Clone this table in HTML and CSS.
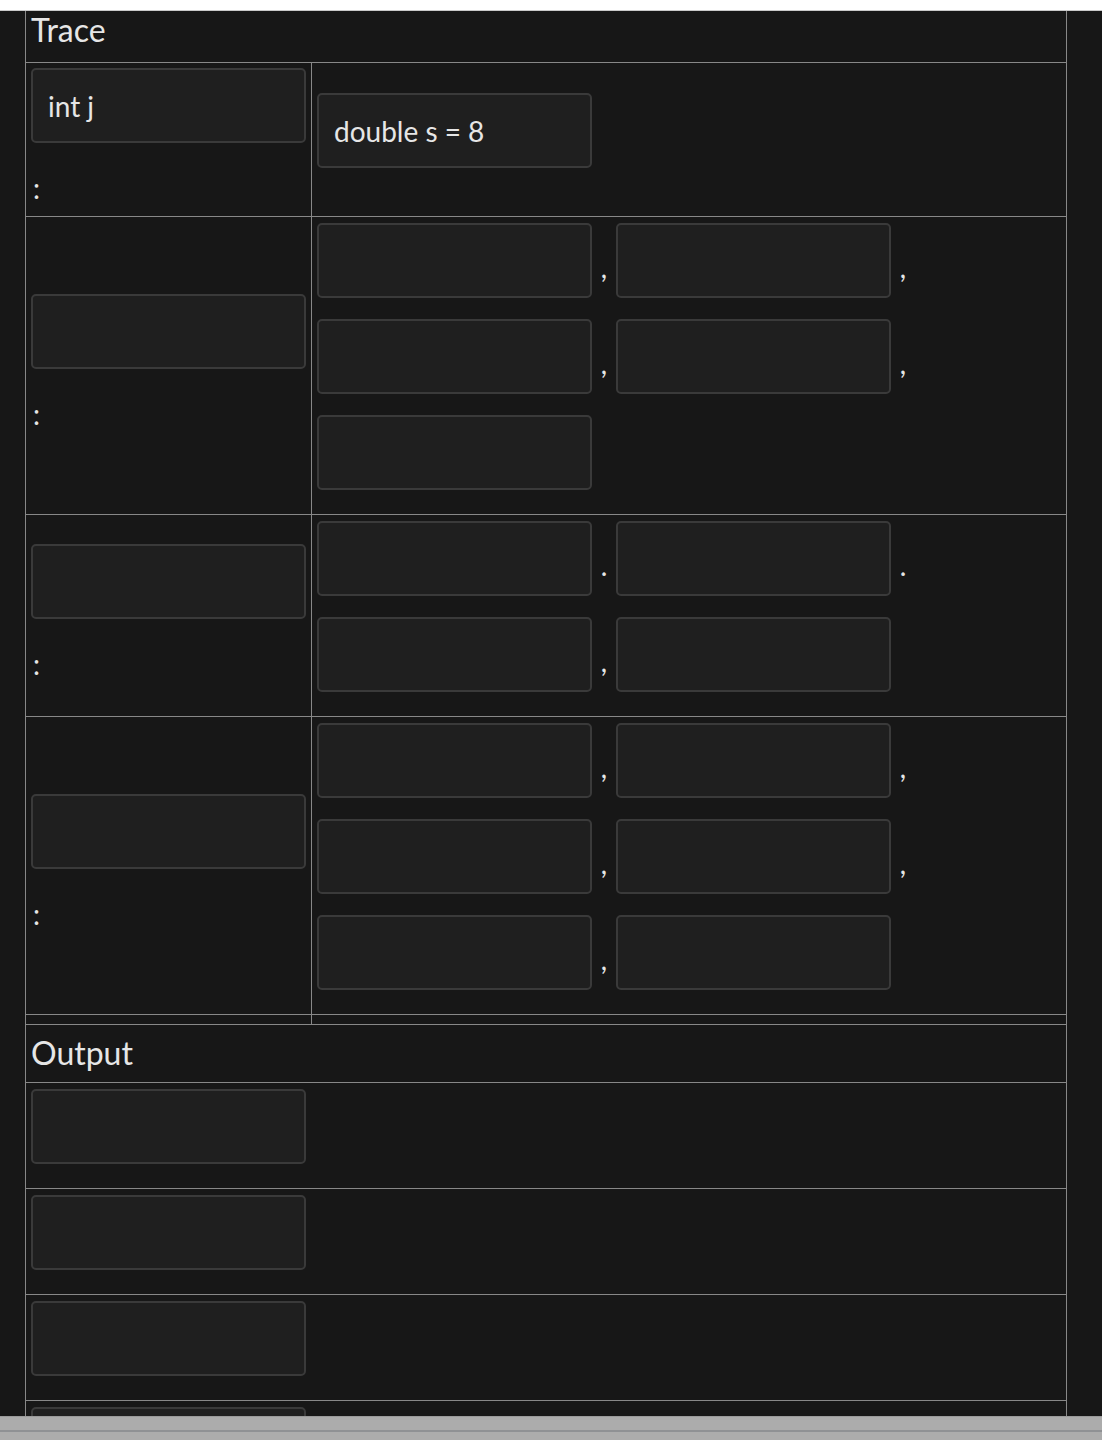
FILE: index.html
```html
<!DOCTYPE html>
<html>
<head>
<meta charset="utf-8">
<link rel="stylesheet" href="styles.css">
</head>
<body>
<div class="topstrip"></div>
<div class="viewport">
  <div class="sheet">
    <div class="head head-trace">Trace</div>

    <div class="row">
      <div class="lcell">
        <div class="box text">int j</div>
        <div class="colon">:</div>
      </div>
      <div class="rcell rcell-single">
        <div class="line"><div class="box text">double s = 8</div></div>
      </div>
    </div>

    <div class="row">
      <div class="lcell">
        <div class="box"></div>
        <div class="colon">:</div>
      </div>
      <div class="rcell">
        <div class="line"><div class="box"></div><span class="sep">,</span><div class="box"></div><span class="sep">,</span></div>
        <div class="line"><div class="box"></div><span class="sep">,</span><div class="box"></div><span class="sep">,</span></div>
        <div class="line"><div class="box"></div></div>
      </div>
    </div>

    <div class="row">
      <div class="lcell">
        <div class="box"></div>
        <div class="colon">:</div>
      </div>
      <div class="rcell">
        <div class="line"><div class="box"></div><span class="sep">.</span><div class="box"></div><span class="sep">.</span></div>
        <div class="line"><div class="box"></div><span class="sep">,</span><div class="box"></div></div>
      </div>
    </div>

    <div class="row">
      <div class="lcell">
        <div class="box"></div>
        <div class="colon">:</div>
      </div>
      <div class="rcell">
        <div class="line"><div class="box"></div><span class="sep">,</span><div class="box"></div><span class="sep">,</span></div>
        <div class="line"><div class="box"></div><span class="sep">,</span><div class="box"></div><span class="sep">,</span></div>
        <div class="line"><div class="box"></div><span class="sep">,</span><div class="box"></div></div>
      </div>
    </div>

    <div class="row row-thin">
      <div class="lcell"></div>
      <div class="rcell"></div>
    </div>

    <div class="head head-output">Output</div>

    <div class="orow"><div class="box"></div></div>
    <div class="orow"><div class="box"></div></div>
    <div class="orow"><div class="box"></div></div>
    <div class="orow"><div class="box"></div></div>
  </div>
</div>
<div class="bottombar"></div>
</body>
</html>
```

FILE: styles.css
```css
html, body {
  margin: 0;
  padding: 0;
}
body {
  background: #171717;
  color: #e6e6e6;
  font-family: Lato, "Liberation Sans", sans-serif;
  font-size: 28px;
  height: 1440px;
  overflow: hidden;
}
.topstrip {
  height: 10px;
  background: #ffffff;
  border-bottom: 1px solid #c9c9c9;
}
.viewport {
  height: 1405px;
  overflow: hidden;
}
.sheet {
  margin-left: 25px;
  width: 1040px;
  border-left: 1px solid #888888;
  border-right: 1px solid #888888;
}
.head {
  border-bottom: 1px solid #888888;
  font-size: 32px;
  padding-left: 5px;
  box-sizing: border-box;
  line-height: 36px;
}
.head-trace {
  height: 52px;
  padding-top: 0;
  line-height: 38px;
}
.head-output {
  height: 58px;
  padding-top: 10px;
}
.row {
  display: grid;
  grid-template-columns: 286px 1fr;
  border-bottom: 1px solid #888888;
}
.lcell {
  border-right: 1px solid #888888;
  display: flex;
  flex-direction: column;
  justify-content: center;
  padding-left: 5px;
}
.lcell .box {
  margin: 5px 0;
}
.colon {
  height: 68px;
  box-sizing: border-box;
  padding-top: 23px;
  line-height: 34px;
  padding-left: 2px;
}
.rcell {
  display: flex;
  flex-direction: column;
  gap: 21px;
  padding: 6px 6px 24px 5px;
}
.rcell-single {
  justify-content: center;
}
.row-thin .lcell, .row-thin .rcell {
  height: 9px;
  padding: 0;
  box-sizing: border-box;
}
.line {
  display: flex;
  align-items: flex-start;
}
.box {
  width: 275px;
  height: 75px;
  box-sizing: border-box;
  border: 2px solid #3a3a3a;
  border-radius: 5px;
  background: #1f1f1f;
  flex: none;
}
.text {
  padding: 0 15px;
  display: flex;
  align-items: center;
  line-height: 34px;
}
.sep {
  width: 24px;
  height: 75px;
  box-sizing: border-box;
  padding-top: 27px;
  line-height: 34px;
  text-align: center;
  flex: none;
}
.orow {
  border-bottom: 1px solid #888888;
  padding: 6px 5px 24px;
}
.bottombar {
  height: 24px;
  box-sizing: border-box;
  background: #acacac;
  border-top: 1px solid #9a9a9a;
}
.bottombar::after {
  content: "";
  display: block;
  height: 2px;
  margin-top: 13px;
  background: #8f9194;
}
```
